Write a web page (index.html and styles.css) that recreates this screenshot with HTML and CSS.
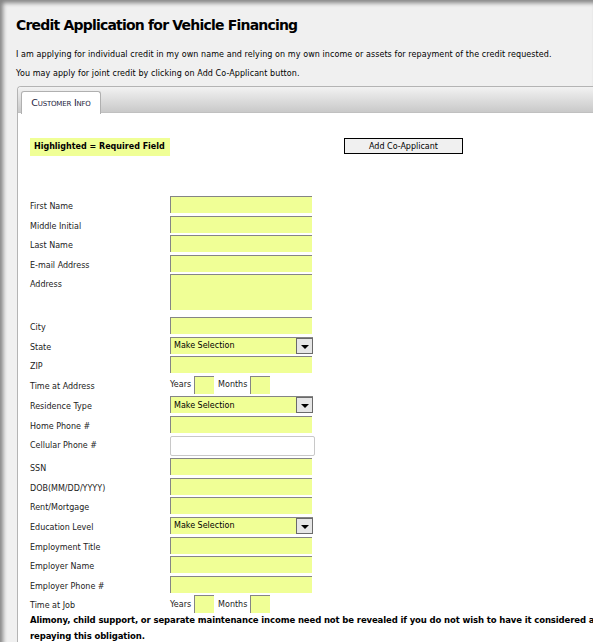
FILE: index.html
```html
<!DOCTYPE html>
<html>
<head>
  <meta charset="UTF-8">
  <title>Credit Application for Vehicle Financing</title>
  <link rel="stylesheet" href="styles.css">
</head>
<body>
  <div class="page">
    <h1>Credit Application for Vehicle Financing</h1>
    <p class="intro">I am applying for individual credit in my own name and relying on my own income or assets for repayment of the credit requested.</p>
    <p class="intro">You may apply for joint credit by clicking on Add Co-Applicant button.</p>

    <div class="tabs">
      <div class="tab-bar">
        <div class="tab active">Customer Info</div>
      </div>
      <div class="tab-body">
        <div class="top-row">
          <span class="req-note">Highlighted = Required Field</span>
          <button class="co-btn">Add Co-Applicant</button>
        </div>

        <div class="form">
          <label>First Name</label>
          <div><input class="req" type="text"></div>
          <label>Middle Initial</label>
          <div><input class="req" type="text"></div>
          <label>Last Name</label>
          <div><input class="req" type="text"></div>
          <label>E-mail Address</label>
          <div><input class="req" type="text"></div>
          <label>Address</label>
          <div><textarea class="req"></textarea></div>
          <label>City</label>
          <div><input class="req" type="text"></div>
          <label>State</label>
          <div class="select"><span>Make Selection</span><i class="arrow"></i></div>
          <label>ZIP</label>
          <div><input class="req" type="text"></div>
          <label>Time at Address</label>
          <div class="time">Years <input class="req small" type="text"> Months <input class="req small" type="text"></div>
          <label>Residence Type</label>
          <div class="select"><span>Make Selection</span><i class="arrow"></i></div>
          <label>Home Phone #</label>
          <div><input class="req" type="text"></div>
          <label class="tall">Cellular Phone #</label>
          <div><input class="plain" type="text"></div>
          <label>SSN</label>
          <div><input class="req" type="text"></div>
          <label>DOB(MM/DD/YYYY)</label>
          <div><input class="req" type="text"></div>
          <label>Rent/Mortgage</label>
          <div><input class="req" type="text"></div>
          <label>Education Level</label>
          <div class="select"><span>Make Selection</span><i class="arrow"></i></div>
          <label>Employment Title</label>
          <div><input class="req" type="text"></div>
          <label>Employer Name</label>
          <div><input class="req" type="text"></div>
          <label>Employer Phone #</label>
          <div><input class="req" type="text"></div>
          <label>Time at Job</label>
          <div class="time">Years <input class="req small" type="text"> Months <input class="req small" type="text"></div>
        </div>

        <p class="notice">Alimony, child support, or separate maintenance income need not be revealed if you do not wish to have it considered as a basis for<br>repaying this obligation.</p>
      </div>
    </div>
  </div>
</body>
</html>
```

FILE: styles.css
```css
html, body {
  margin: 0;
  height: 100%;
  overflow: hidden;
}
body {
  background: #f0f0f0;
  font-family: "DejaVu Sans", Verdana, sans-serif;
  color: #000;
}
.page {
  min-height: 100%;
  padding: 14px 0 0 16px;
  box-sizing: border-box;
  box-shadow: inset 3px 3px 4px rgba(0, 0, 0, 0.45);
}
h1 {
  margin: 0 0 11px 0;
  font-size: 14px;
  letter-spacing: -0.8px;
  font-weight: bold;
  line-height: 22px;
}
.intro {
  margin: 0 0 4px 0;
  font-size: 8px;
  line-height: 15px;
  letter-spacing: 0.08px;
}
.tabs {
  margin-top: 5px;
  margin-left: 1px;
  width: 720px;
  border: 1px solid #b4b4b4;
  border-right: none;
  border-radius: 4px 0 0 0;
  background: #fff;
}
.tab-bar {
  height: 26px;
  padding: 4px 0 0 3px;
  box-sizing: border-box;
  background: linear-gradient(#f2f2f2, #c9c9c9);
  border-bottom: 1px solid #c0c0c0;
  border-radius: 3px 0 0 0;
}
.tab {
  display: inline-block;
  width: 80px;
  height: 23px;
  box-sizing: border-box;
  padding-top: 5px;
  text-align: center;
  font-size: 9.5px;
  font-variant: small-caps;
  letter-spacing: -0.2px;
  color: #1c1c3c;
  background: #fff;
  border: 1px solid #b0b0b0;
  border-bottom: none;
  border-radius: 3px 3px 0 0;
}
.tab-body {
  padding: 25px 0 0 12px;
}
.top-row {
  display: flex;
  align-items: flex-start;
  height: 58px;
}
.req-note {
  display: inline-block;
  background: #f0ff96;
  font-size: 8px;
  font-weight: bold;
  padding: 4px 4px 4px 4px;
  line-height: 10px;
  width: 132px;
}
.co-btn {
  margin-left: 174px;
  width: 119px;
  height: 16px;
  padding: 0;
  font-family: "DejaVu Sans", Verdana, sans-serif;
  font-size: 8px;
  color: #000;
  background: #f0f0f0;
  border: 1px solid #000;
  border-radius: 0;
}
.form {
  display: grid;
  grid-template-columns: 140px 160px;
  row-gap: 2.6px;
  font-size: 8px;
  color: #222;
}
.form label {
  padding-top: 6px;
  line-height: 10px;
}
.form label.tall {
  padding-top: 5px;
}
input, textarea {
  box-sizing: border-box;
  margin: 0;
  font-family: inherit;
  display: block;
}
input.req, textarea.req {
  width: 142px;
  height: 17px;
  background: #f0ff96;
  border: none;
  border-top: 1px solid #858585;
  border-left: 1px solid #858585;
}
textarea.req {
  height: 36px;
  resize: none;
  margin-bottom: 4px;
}
input.plain {
  width: 145px;
  height: 20px;
  background: #fff;
  border: 1px solid #c8c8c8;
  border-radius: 2px;
}
.select {
  width: 143px;
  height: 17px;
  box-sizing: border-box;
  display: flex;
  align-items: center;
  background: #f0ff96;
  border-top: 1px solid #858585;
  border-left: 1px solid #858585;
  color: #000;
}
.select span {
  flex: 1;
  padding-left: 3px;
}
.arrow {
  width: 17px;
  height: 16px;
  box-sizing: border-box;
  background: #e6e6e6;
  border: 1px solid #6a6a6a;
  position: relative;
}
.arrow::after {
  content: "";
  position: absolute;
  left: 4px;
  top: 6px;
  border-left: 4px solid transparent;
  border-right: 4px solid transparent;
  border-top: 4px solid #000;
}
.time {
  display: flex;
  align-items: center;
  gap: 3px;
}
input.small {
  width: 20px;
  height: 18px;
  display: inline-block;
}
.time input.small:first-of-type {
  margin-right: 1px;
}
.notice {
  margin: -1px 0 0 0;
  font-size: 8.5px;
  font-weight: bold;
  line-height: 16px;
  letter-spacing: -0.12px;
}
```
